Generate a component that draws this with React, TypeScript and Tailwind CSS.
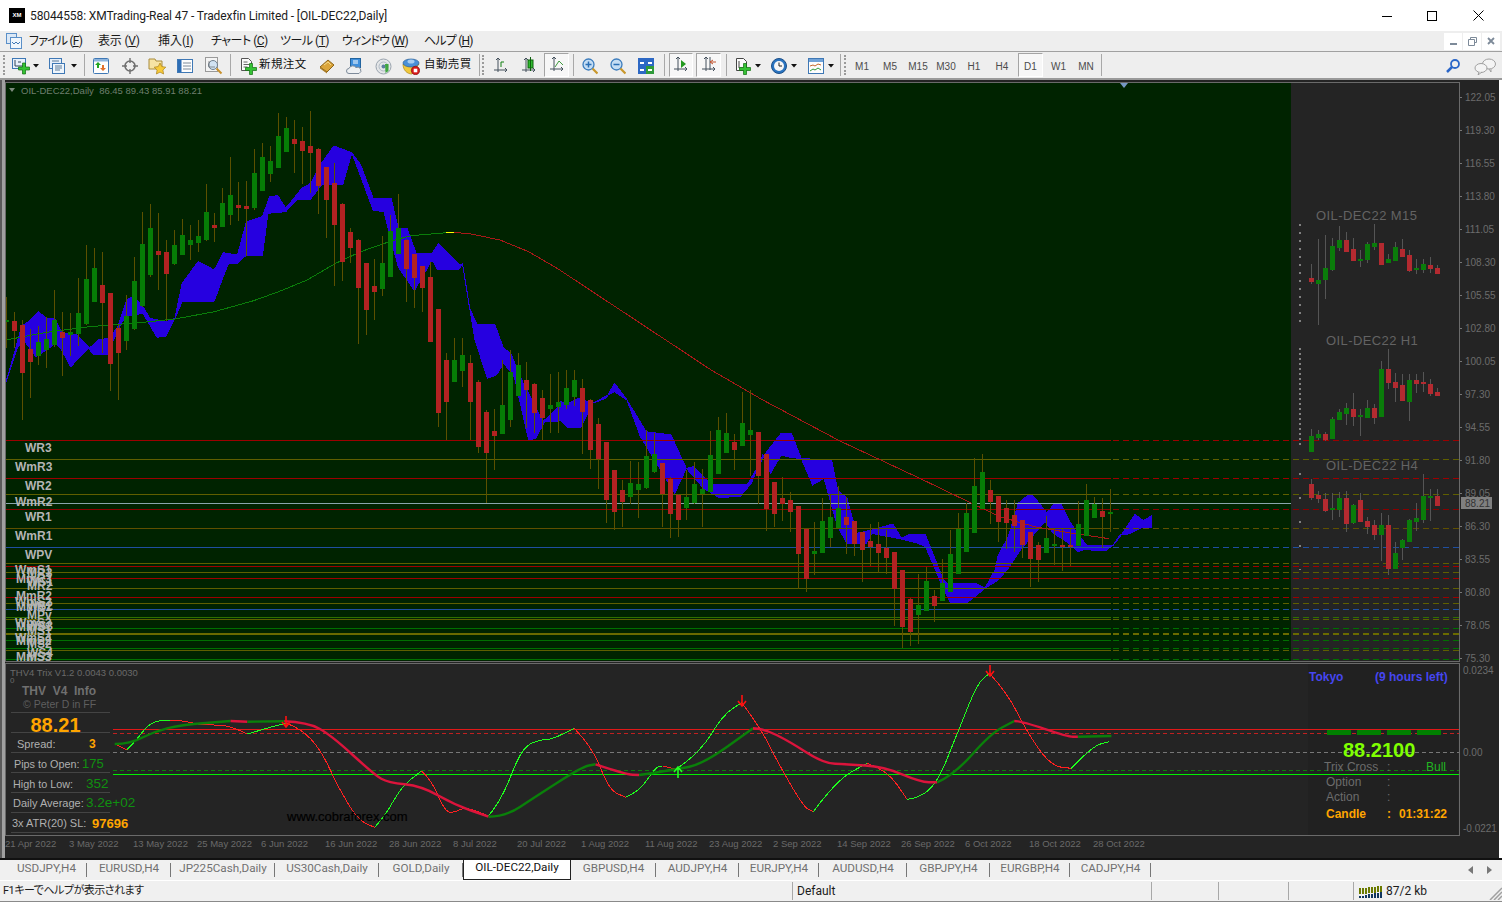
import React from "react";

const SANS = "font-['Liberation_Sans',Arial,sans-serif]";
const UI = "font-['Roboto','Noto_Sans_CJK_JP',sans-serif] [font-feature-settings:'palt']";

// candle rows: [bodyTop, bodyBottom, wickTop, wickBottom, up?] measured off the chart
type Row = [number, number, number, number, number];

const LEFT: Row[] = [
  [660, 665, 590, 745, 1], [663, 693, 636, 745, 0], [675, 819, 660, 960, 0], [747, 786, 688, 893, 0],
  [726, 768, 678, 795, 1], [717, 750, 652, 803, 1], [660, 735, 570, 740, 1], [696, 713, 636, 827, 0],
  [696, 705, 640, 768, 1], [639, 702, 533, 738, 1], [537, 672, 435, 675, 1], [504, 606, 444, 606, 1],
  [555, 609, 457, 760, 0], [579, 792, 578, 873, 0], [684, 759, 672, 900, 0], [648, 723, 585, 750, 1],
  [543, 687, 471, 690, 1], [432, 618, 336, 620, 1], [384, 525, 312, 530, 1], [453, 465, 339, 570, 0],
  [456, 522, 420, 662, 0], [435, 492, 390, 495, 1], [405, 465, 357, 466, 1], [420, 435, 375, 480, 1],
  [408, 429, 360, 456, 1], [336, 420, 252, 422, 1], [375, 384, 339, 426, 0], [309, 381, 264, 382, 1],
  [285, 345, 171, 375, 1], [315, 324, 246, 363, 0], [318, 327, 243, 468, 0], [219, 324, 147, 330, 1],
  [171, 273, 129, 274, 1], [183, 222, 138, 246, 1], [108, 204, 39, 205, 1], [84, 156, 51, 157, 1],
  [117, 132, 60, 219, 0], [123, 153, 81, 252, 0], [138, 159, 33, 280, 0], [147, 258, 145, 342, 0],
  [201, 300, 200, 414, 0], [249, 375, 189, 558, 0], [312, 486, 310, 543, 0], [396, 444, 384, 490, 0],
  [420, 564, 418, 732, 0], [489, 630, 488, 705, 0], [558, 576, 477, 660, 0], [489, 567, 408, 588, 1],
  [393, 531, 345, 532, 1], [384, 462, 282, 463, 1], [420, 507, 418, 606, 0], [462, 534, 461, 624, 0],
  [498, 564, 497, 636, 0], [531, 726, 487, 727, 0], [627, 939, 626, 980, 0], [780, 906, 760, 1020, 0],
  [780, 846, 714, 847, 1], [765, 813, 714, 860, 1], [789, 906, 765, 1020, 0], [846, 1040, 840, 1060, 0],
  [936, 1060, 930, 1210, 0], [993, 1008, 927, 1110, 0], [915, 1002, 780, 1003, 1], [816, 960, 750, 980, 1],
  [795, 888, 760, 889, 1], [840, 870, 786, 985, 0], [852, 939, 850, 1000, 0], [894, 954, 870, 1020, 0],
  [915, 927, 822, 1000, 1], [906, 920, 815, 1000, 1],
];

const RIGHT: Row[] = [
  [54, 105, 0, 118, 1], [30, 81, 0, 108, 1], [54, 126, 27, 252, 0], [90, 240, 88, 297, 0],
  [162, 268, 145, 357, 0], [216, 390, 215, 459, 0], [300, 426, 299, 480, 0], [360, 396, 330, 471, 0],
  [339, 381, 273, 403, 1], [342, 360, 276, 444, 1], [258, 354, 180, 356, 1], [252, 306, 190, 310, 1],
  [279, 373, 278, 471, 0], [327, 432, 320, 504, 0], [375, 450, 373, 501, 0], [381, 414, 300, 450, 1],
  [342, 400, 276, 402, 1], [357, 373, 296, 471, 1], [255, 366, 183, 367, 1], [180, 312, 141, 313, 1],
  [189, 249, 129, 250, 1], [216, 240, 192, 300, 0], [159, 228, 66, 229, 1], [180, 195, 60, 318, 1],
  [186, 318, 185, 402, 0], [252, 418, 251, 483, 0], [336, 432, 335, 471, 0], [384, 402, 321, 453, 0],
  [390, 426, 366, 486, 0], [408, 552, 407, 656, 0], [477, 626, 476, 665, 0], [543, 552, 456, 615, 1],
  [453, 549, 384, 550, 1], [441, 504, 372, 531, 1], [414, 474, 348, 475, 1], [441, 465, 381, 552, 0],
  [453, 522, 452, 558, 0], [486, 540, 485, 636, 0], [513, 531, 462, 588, 0], [522, 549, 456, 608, 0],
  [533, 564, 480, 612, 0], [546, 656, 545, 768, 0], [600, 771, 599, 834, 0], [686, 786, 685, 828, 0],
  [705, 735, 612, 822, 1], [633, 723, 590, 724, 1], [678, 708, 660, 755, 0], [639, 693, 567, 694, 1],
  [552, 666, 480, 667, 1], [476, 612, 429, 613, 1], [429, 546, 399, 547, 1], [348, 489, 264, 490, 1],
  [306, 417, 252, 418, 1], [360, 396, 330, 462, 0], [378, 456, 377, 516, 0], [414, 459, 390, 538, 0],
  [435, 468, 390, 546, 0], [450, 525, 449, 564, 0], [486, 567, 485, 651, 0], [525, 570, 516, 636, 0],
  [504, 549, 438, 550, 1], [522, 528, 474, 585, 1], [525, 531, 478, 603, 0], [525, 528, 478, 588, 0],
  [462, 528, 393, 529, 1], [390, 498, 342, 499, 1], [402, 444, 380, 445, 1], [423, 441, 384, 534, 0],
  [426, 431, 357, 486, 1],
];

const M15: Row[] = [
  [234, 246, 192, 252, 0], [240, 252, 117, 375, 1], [204, 240, 105, 297, 1], [138, 210, 114, 212, 1],
  [120, 144, 78, 152, 1], [120, 156, 96, 157, 0], [147, 183, 114, 184, 0], [177, 183, 150, 200, 1],
  [132, 180, 126, 188, 1], [129, 141, 72, 150, 1], [129, 195, 128, 196, 0], [177, 189, 162, 190, 1],
  [141, 183, 126, 184, 1], [147, 171, 117, 172, 0], [165, 213, 150, 216, 0], [204, 210, 177, 222, 1],
  [192, 210, 177, 218, 1], [195, 207, 171, 218, 0], [204, 222, 196, 223, 0],
];
const H1: Row[] = [
  [708, 756, 687, 757, 1], [702, 714, 690, 720, 1], [702, 720, 696, 722, 0], [657, 717, 650, 718, 1],
  [636, 660, 627, 661, 1], [624, 642, 609, 675, 1], [627, 651, 579, 678, 0], [645, 651, 627, 708, 1],
  [624, 654, 600, 655, 1], [624, 654, 612, 672, 0], [507, 651, 483, 652, 1], [507, 549, 447, 567, 0],
  [546, 564, 519, 606, 0], [555, 603, 522, 604, 0], [540, 606, 522, 663, 1], [540, 552, 522, 579, 0],
  [546, 552, 516, 576, 0], [552, 582, 537, 587, 0], [576, 588, 564, 589, 0],
];
const H4: Row[] = [
  [852, 894, 837, 900, 0], [885, 897, 873, 909, 0], [897, 933, 880, 936, 0], [924, 930, 879, 960, 1],
  [894, 930, 876, 951, 1], [894, 972, 873, 996, 0], [915, 969, 912, 972, 1], [900, 966, 879, 967, 0],
  [963, 981, 951, 1002, 0], [975, 1005, 960, 1020, 0], [975, 1005, 939, 1083, 1], [975, 1107, 945, 1125, 0],
  [1059, 1107, 1026, 1108, 1], [1020, 1044, 1018, 1080, 1], [960, 1026, 957, 1027, 1], [954, 966, 909, 993, 1],
  [888, 960, 822, 969, 1], [888, 894, 867, 963, 1], [888, 918, 867, 919, 0],
];

// measured coords to page coords
const a = (p: number[][]) => p.map(([x, y]) => `${(x / 2.8).toFixed(1)},${(100 + y / 3).toFixed(1)}`);
const b = (p: number[][]) => p.map(([x, y]) => `${(560 + x / 2.613).toFixed(1)},${(370 + y / 3).toFixed(1)}`);
const c = (p: number[][]) => p.map(([x, y]) => `${(950 + x / 3).toFixed(1)},${(480 + y / 3).toFixed(1)}`);

// indicator curve, rounded through the midpoints of the measured points
const ind = (p: number[][]) => {
  const q = p.map(([x, y]) => [100 + x / 1.493, 660 + y / 3]);
  let d = `M${q[0][0].toFixed(1)} ${q[0][1].toFixed(1)}`;
  for (let i = 1; i < q.length - 1; i++) {
    const mx = (q[i][0] + q[i + 1][0]) / 2;
    const my = (q[i][1] + q[i + 1][1]) / 2;
    d += `Q${q[i][0].toFixed(1)} ${q[i][1].toFixed(1)} ${mx.toFixed(1)} ${my.toFixed(1)}`;
  }
  const e = q[q.length - 1];
  return `${d}L${e[0].toFixed(1)} ${e[1].toFixed(1)}`;
};

const cloud = [
  ...a([[17, 845], [40, 760], [60, 680], [85, 660], [108, 635], [130, 655], [152, 655], [175, 700], [215, 705], [248, 742], [258, 740], [275, 720], [305, 715], [330, 680], [355, 600], [375, 588], [400, 620], [420, 655], [465, 665], [490, 655], [510, 550], [555, 485], [600, 510], [625, 458], [665, 465], [690, 365], [735, 350], [755, 290], [778, 287], [800, 325], [845, 265], [870, 250], [900, 190], [935, 138], [985, 158], [1010, 195], [1045, 295], [1095, 295], [1115, 385], [1140, 385], [1165, 460], [1210, 460], [1228, 430], [1285, 492], [1295, 492], [1315, 625], [1335, 672], [1385, 672], [1410, 745], [1430, 760], [1465, 850], [1480, 880], [1520, 965], [1560, 925]]),
  ...b([[0, 95], [20, 100], [50, 85], [85, 100], [120, 85], [143, 40], [175, 90], [225, 185], [290, 195], [330, 295], [350, 290], [375, 320], [395, 343], [490, 343], [540, 245], [578, 190], [605, 190], [630, 265], [710, 272], [725, 360], [750, 385], [775, 490], [815, 480], [870, 462], [892, 505], [915, 492], [955, 495], [1000, 625], [1010, 640], [1085, 640]]),
  ...c([[105, 325], [135, 270], [145, 225], [175, 170], [205, 70], [235, 45], [250, 48], [290, 98], [315, 70], [335, 75], [360, 125], [385, 165], [410, 195], [490, 195], [510, 170], [555, 103], [580, 122], [603, 108],
    [603, 143], [575, 143], [535, 162], [510, 165], [490, 195], [465, 213], [440, 212], [405, 208], [385, 215], [350, 185], [310, 160], [285, 125], [250, 165], [215, 205], [195, 235], [175, 265], [145, 300], [105, 325]]),
  ...b([[1065, 697], [1020, 697], [1000, 650], [955, 530], [935, 520], [890, 507], [815, 490], [800, 520], [750, 520], [725, 470], [690, 325], [660, 345], [630, 265], [605, 263], [578, 255], [550, 310], [530, 255], [500, 340], [470, 380], [415, 382], [375, 355], [330, 295], [300, 370], [210, 200], [175, 90], [143, 65], [85, 100], [55, 172], [20, 172], [0, 150]]),
  ...a([[1560, 965], [1525, 965], [1500, 1015], [1480, 1020], [1440, 830], [1410, 790], [1390, 825], [1365, 835], [1330, 720], [1295, 492], [1285, 508], [1225, 508], [1210, 480], [1160, 572], [1115, 500], [1075, 335], [1045, 330], [985, 158], [960, 253], [900, 255], [870, 297], [830, 300], [800, 335], [750, 340], [735, 465], [690, 465], [665, 490], [640, 490], [625, 530], [600, 603], [510, 605], [490, 655], [465, 708], [440, 712], [400, 640], [350, 650], [330, 690], [300, 764], [262, 764], [248, 745], [198, 800], [170, 745], [155, 730], [130, 750], [100, 770], [70, 725], [50, 740]]),
].join(" ");

const levels: [number, string][] = [
  [440.5, "#9c0000"], [459.5, "#5f5f00"], [478.5, "#9c0000"], [494.5, "#5f5f00"], [509.5, "#8a0000"], [528.5, "#5f5000"],
  [547.5, "#1f4fa0"], [563.5, "#5f5f00"], [566.5, "#a00000"], [572.5, "#5f5f00"], [578.5, "#a00000"], [588.5, "#5f5f00"],
  [597.5, "#9c0000"], [603.5, "#5f5f00"], [609.5, "#1f4fa0"], [617.5, "#2f7000"], [619.5, "#5f5f00"], [628.5, "#007000"],
  [633, "#6a6a00"], [634, "#6a6a00"], [640.5, "#007000"], [648.5, "#007000"], [650.5, "#5f5f00"], [659.5, "#007000"],
];

const labels: [string, number, number][] = [
  ["WR3", 25, 452], ["WmR3", 15, 471], ["WR2", 25, 490], ["WmR2", 15, 506], ["WR1", 25, 521], ["WmR1", 15, 540], ["WPV", 25, 559],
  ["WmS1", 15, 574], ["MR3", 27, 577], ["MmR3", 16, 583], ["WS1", 27, 586], ["MR2", 27, 590], ["MmR2", 16, 600], ["WmS2", 15, 606], ["MmR1", 16, 611],
  ["WS2", 27, 610], ["MPv", 27, 619], ["WmS3", 15, 627], ["MmS1", 16, 631], ["MS1", 27, 635], ["WS3", 27, 630], ["WmS4", 15, 642], ["MmS2", 16, 645], ["MS2", 27, 648], ["WS4", 27, 657], ["MmS3", 16, 661], ["MS3", 27, 661],
];

const prices = ["122.05", "119.30", "116.55", "113.80", "111.05", "108.30", "105.55", "102.80", "100.05", "97.30", "94.55", "91.80", "89.05", "86.30", "83.55", "80.80", "78.05", "75.30"];
const dates = ["21 Apr 2022", "3 May 2022", "13 May 2022", "25 May 2022", "6 Jun 2022", "16 Jun 2022", "28 Jun 2022", "8 Jul 2022", "20 Jul 2022", "1 Aug 2022", "11 Aug 2022", "23 Aug 2022", "2 Sep 2022", "14 Sep 2022", "26 Sep 2022", "6 Oct 2022", "18 Oct 2022", "28 Oct 2022"];

const Candle = ({ x, r, oy, scale, up, down, wick, w = 5 }: { x: number; r: Row; oy: number; scale: number; up: string; down: string; wick: string; w?: number }) => (
  <g>
    <rect x={x} y={oy + r[2] / scale} width={1} height={(r[3] - r[2]) / scale} fill={wick} />
    <rect x={x - (w - 1) / 2} y={oy + r[0] / scale} width={w} height={Math.max(2, (r[1] - r[0]) / scale)} fill={r[4] ? up : down} />
  </g>
);

const Mini = ({ rows }: { rows: Row[] }) => (
  <g>
    {rows.map((r, i) => (
      <Candle key={i} x={1311 + i * 7} r={r} oy={200} scale={3} up="#0a7c0a" down="#b32a30" wick="#555555" />
    ))}
  </g>
);

const MainChart = () => (
  <svg width={1494} height={582} viewBox="5 80 1494 582" className="block" shapeRendering="crispEdges" fontFamily="'Liberation Sans',Arial,sans-serif">
    <rect x={5} y={80} width={1494} height={582} fill="#242424" />
    <rect x={6} y={83} width={1285} height={578} fill="#002300" />
    <rect x={1291} y={83} width={168} height={578} fill="#242424" />
    <polygon points={cloud} fill="#2600e0" stroke="#2600e0" strokeWidth={1} />
    {levels.map(([y, col], i) => (
      <g key={i}>
        <rect x={6} y={Math.floor(y)} width={1105} height={1} fill={col} />
        <line x1={1113} x2={1459} y1={Math.floor(y) + 0.5} y2={Math.floor(y) + 0.5} stroke={col} strokeDasharray="6 4" />
      </g>
    ))}
    <rect x={6} y={503} width={1285} height={1} fill="#8aa5ad" />
    <polyline fill="none" stroke="#0a7d0a" points={a([[17, 720], [130, 697], [250, 680], [400, 667], [490, 657], [600, 635], [710, 602], [780, 575], [860, 540], [940, 490], [1010, 455], [1090, 425], [1150, 407], [1250, 398]]).join(" ")} />
    <polyline fill="none" stroke="#ffff00" points={a([[1250, 398], [1270, 398]]).join(" ")} />
    <polyline fill="none" stroke="#a81818" points={[...a([[1270, 398], [1310, 400], [1400, 420], [1480, 455], [1560, 505]]), ...b([[395, 0], [530, 90], [730, 212], [940, 325], [1085, 405], [1150, 440], [1240, 470], [1340, 490], [1435, 506]])].join(" ")} />
    {LEFT.map((r, i) => (
      <Candle key={i} x={6 + i * 8} r={r} oy={100} scale={3} up="#067d06" down="#b22222" wick="#5c5000" />
    ))}
    {RIGHT.map((r, i) => (
      <Candle key={i} x={566 + i * 8} r={r} oy={370} scale={3} up="#067d06" down="#b22222" wick="#5c5000" />
    ))}
    <Mini rows={M15} />
    <Mini rows={H1} />
    <Mini rows={H4} />
    <line x1={1300} x2={1300} y1={224} y2={322} stroke="#808080" strokeWidth={2} strokeDasharray="2 6" />
    <line x1={1300} x2={1300} y1={348} y2={446} stroke="#808080" strokeWidth={2} strokeDasharray="2 3" />
    <line x1={1300} x2={1300} y1={473} y2={570} stroke="#808080" strokeWidth={2} strokeDasharray="2 22" />
    <g fontSize={13} fill="#636363" letterSpacing={0.4} shapeRendering="auto">
      <text x={1316} y={220}>OIL-DEC22 M15</text>
      <text x={1326} y={345}>OIL-DEC22 H1</text>
      <text x={1326} y={470}>OIL-DEC22 H4</text>
    </g>
    <clipPath id="paneclip"><rect x={6} y={83} width={200} height={578} /></clipPath>
    <g fontSize={12} fontWeight={700} fill="#b4b4b4" shapeRendering="auto" clipPath="url(#paneclip)">
      {labels.map(([t, x, y], i) => (
        <text key={i} x={x} y={y}>{t}</text>
      ))}
    </g>
    <path d="M9 88h6l-3 4z" fill="#7d8a7d" shapeRendering="auto" />
    <text x={21} y={94} fontSize={9.5} fill="#6f7f6f" shapeRendering="auto">{"OIL-DEC22,Daily\u00A0\u00A086.45 89.43 85.91 88.21"}</text>
    <path d="M1120 83h8l-4 5z" fill="#7798c4" shapeRendering="auto" />
    <rect x={5.5} y={82.5} width={1454} height={579} fill="none" stroke="#6a6a6a" />
    {prices.map((p, i) => (
      <g key={p}>
        <rect x={1460} y={97 + i * 33} width={2} height={1} fill="#777777" />
        <text x={1465} y={101 + i * 33} fontSize={10} fill="#6c6c6c" shapeRendering="auto">{p}</text>
      </g>
    ))}
    <rect x={1461} y={497} width={31} height={12} fill="#808080" />
    <text x={1465} y={507} fontSize={10} fill="#333333" shapeRendering="auto">88.21</text>
  </svg>
);

const DownArrow = ({ x, y }: { x: number; y: number }) => (
  <path d={`M${x} ${y - 6}v10M${x - 4} ${y}l4 5l4 -5`} fill="none" stroke="#ff1010" strokeWidth={1.6} />
);

const Fast = ({ up, p }: { up?: boolean; p: number[][] }) => <path d={ind(p)} fill="none" stroke={up ? "#1eff1e" : "#ff2020"} strokeWidth={1} shapeRendering="crispEdges" />;
const Slow = ({ up, p }: { up?: boolean; p: number[][] }) => <path d={ind(p)} fill="none" stroke={up ? "#0a800a" : "#dc143c"} strokeWidth={2.4} />;

const IndicatorChart = () => (
  <svg width={1494} height={175} viewBox="5 662 1494 175" className="block" fontFamily="'Liberation Sans',Arial,sans-serif">
    <rect x={5} y={662} width={1494} height={175} fill="#242424" />
    <rect x={1308} y={664} width={150} height={171} fill="#212121" />
    <g shapeRendering="crispEdges">
      <line x1={113} x2={1459} y1={729.5} y2={729.5} stroke="#e01818" />
      <line x1={113} x2={1459} y1={733.5} y2={733.5} stroke="#c02020" strokeDasharray="4 3" />
      <line x1={113} x2={1459} y1={752.5} y2={752.5} stroke="#777777" strokeDasharray="4 3" />
      <line x1={113} x2={1459} y1={770.5} y2={770.5} stroke="#0c800c" strokeDasharray="4 3" />
      <line x1={113} x2={1459} y1={774.5} y2={774.5} stroke="#00f000" />
    </g>
    <Fast p={[[22, 252], [40, 270]]} />
    <Fast up p={[[40, 270], [55, 240], [75, 185], [105, 180]]} />
    <Fast p={[[105, 180], [125, 182], [150, 195], [190, 195], [220, 222]]} />
    <Fast up p={[[220, 222], [260, 198], [278, 190]]} />
    <Fast p={[[278, 190], [300, 205], [330, 270], [355, 380], [385, 480], [410, 502]]} />
    <Fast up p={[[410, 502], [425, 470], [450, 380], [480, 333]]} />
    <Fast p={[[480, 333], [495, 360], [515, 455], [530, 458], [545, 440], [580, 468]]} />
    <Fast up p={[[580, 468], [600, 420], [630, 260], [660, 238], [675, 238], [708, 205]]} />
    <Fast p={[[708, 205], [735, 260], [760, 390], [785, 412]]} />
    <Fast up p={[[785, 412], [805, 395], [830, 320], [840, 318]]} />
    <Fast p={[[840, 318], [860, 328]]} />
    <Fast up p={[[860, 328], [895, 280], [930, 165], [958, 128]]} />
    <Fast p={[[958, 128], [985, 200], [1010, 300], [1050, 440], [1065, 455]]} />
    <Fast up p={[[1065, 455], [1100, 360], [1145, 310]]} />
    <Fast p={[[1145, 310], [1175, 330], [1205, 418]]} />
    <Fast up p={[[1205, 418], [1222, 415], [1250, 370], [1280, 220], [1310, 70], [1328, 40]]} />
    <Fast p={[[1328, 40], [1355, 100], [1385, 220], [1420, 318], [1450, 325]]} />
    <Fast up p={[[1450, 325], [1482, 258], [1507, 245]]} />
    <Slow up p={[[22, 252], [45, 252], [80, 215], [120, 195], [195, 183]]} />
    <Slow p={[[195, 183], [220, 185]]} />
    <Slow up p={[[220, 185], [275, 184]]} />
    <Slow p={[[275, 184], [310, 187], [345, 225], [410, 345], [430, 368], [480, 378], [530, 435], [580, 470]]} />
    <Slow up p={[[580, 470], [605, 470], [650, 410], [720, 320], [740, 313]]} />
    <Slow p={[[740, 313], [785, 343], [805, 345]]} />
    <Slow up p={[[805, 345], [860, 328], [900, 312], [975, 205]]} />
    <Slow p={[[975, 205], [990, 205], [1030, 245], [1080, 310], [1115, 313], [1170, 320], [1225, 366], [1250, 367]]} />
    <Slow up p={[[1250, 367], [1275, 345], [1330, 220], [1365, 183]]} />
    <Slow p={[[1365, 183], [1375, 183], [1445, 230], [1460, 230]]} />
    <Slow up p={[[1460, 230], [1510, 228]]} />
    <DownArrow x={286} y={722} />
    <DownArrow x={742} y={701} />
    <DownArrow x={990} y={671} />
    <path d="M678 778v-10M674 772l4 -5l4 5" fill="none" stroke="#22ff22" strokeWidth={1.6} />
    <text x={287} y={821} fontSize={13} fill="#000000" stroke="#000000" strokeWidth={0.2}>www.cobraforex.com</text>
    <text x={10} y={676} fontSize={9.5} fill="#6a6a6a">THV4 Trix V1.2 0.0043 0.0030</text>
    <text x={10} y={683} fontSize={8} fill="#6a6a6a">0</text>
    <rect x={5.5} y={663.5} width={1454} height={172} fill="none" stroke="#6a6a6a" shapeRendering="crispEdges" />
    <g fontSize={10} fill="#6c6c6c">
      <text x={1463} y={674}>0.0234</text>
      <text x={1463} y={756}>0.00</text>
      <text x={1463} y={832}>-0.0221</text>
    </g>
  </svg>
);

const InfoRow = ({ label, lw, value, cls = "", pt = "pt-[3px]" }: { label: string; lw: string; value: string; cls?: string; pt?: string }) => (
  <div className={`flex h-[20px] items-center border-b border-[#444444] whitespace-nowrap text-[11px] text-[#b0b0b0] ${pt}`}>
    <span className={`shrink-0 ${lw}`}>{label}</span>
    <span className={`shrink-0 ${cls}`}>{value}</span>
  </div>
);

const InfoPanel = () => (
  <div className={`absolute left-[6px] top-[22px] w-[99px] ${SANS}`}>
    <div className="h-[29px] border-b border-[#444444]">
      <div className="pl-[11px] text-[12px] leading-[14px] font-bold whitespace-pre text-[#707070]">THV  V4  Info</div>
      <div className="pl-[12px] text-[10.5px] leading-[13px] text-[#5f5f5f]">© Peter D in FF</div>
    </div>
    <div className="flex h-[20px] items-center justify-center border-b border-[#444444] pt-[5px] pr-[10px] text-[20px] font-bold text-[#ffa500]">88.21</div>
    <InfoRow label="Spread:" lw="w-[78px] pl-[6px]" value="3" cls="text-[12px] font-bold text-[#ffa500]" />
    <InfoRow label="Pips to Open:" lw="w-[71px] pl-[3px] text-[10.8px]" value="175" cls="text-[13px] text-[#109010]" />
    <InfoRow label="High to Low:" lw="w-[75px] pl-[2px] text-[10.8px]" value="352" cls="text-[13.5px] text-[#109010]" />
    <InfoRow label="Daily Average:" lw="w-[75px] pl-[2px]" value="3.2e+02" cls="text-[13.5px] text-[#109010]" pt="pt-[1px]" />
    <InfoRow label="3x ATR(20) SL:" lw="w-[81px] pl-[1px]" value="97696" cls="text-[13px] font-bold text-[#ffa500]" pt="pt-[2px]" />
  </div>
);

const SignalRow = ({ label, color = "text-[#6c6c6c]", value, indent = "pl-[18px]" }: { label: string; color?: string; value?: React.ReactNode; indent?: string }) => (
  <div className={`flex h-[15px] items-center text-[12px] leading-[15px] ${color}`}>
    <span className={`w-[79px] ${indent}`}>{label}</span>
    <span className="w-[12px]">:</span>
    {value}
  </div>
);

const SignalPanel = () => (
  <div className={`absolute left-[1303px] top-[8px] w-[150px] ${SANS}`}>
    <div className="flex h-[14px] items-center text-[12px] font-bold text-[#4646f0]">
      <span className="w-[67px] pl-[1px]">Tokyo</span>
      <span>(9 hours left)</span>
    </div>
    <div className="mt-[46px] flex h-[5px] gap-[6px] pl-[19px]">
      <div className="w-[24px] bg-[#008000]" />
      <div className="w-[24px] bg-[#008000]" />
      <div className="w-[24px] bg-[#008000]" />
      <div className="w-[24px] bg-[#008000]" />
    </div>
    <div className="mt-[4px] h-[21px] pl-[35px] text-[20px] leading-[22px] font-bold text-[#7fff00]">88.2100</div>
    <SignalRow label="Trix Cross" indent="pl-[16px]" value={<span className="ml-[27px] text-[#22b422]">Bull</span>} />
    <SignalRow label="Option" />
    <SignalRow label="Action" />
    <div className="mt-[2px]">
      <SignalRow label="Candle" color="font-bold text-[#ffa500]" value={<span>01:31:22</span>} />
    </div>
  </div>
);

/* ---------- toolbar icons ---------- */

const Plus = ({ x, y }: { x: number; y: number }) => (
  <path d={`M${x - 1.5} ${y - 5.5}h3v4h4v3h-4v4h-3v-4h-4v-3h4z`} fill="#35c235" stroke="#0f6f0f" strokeWidth={0.7} />
);

const Caret = ({ cls }: { cls: string }) => (
  <svg width={6} height={4} className={cls}><path d="M0 0h6L3 3.5z" fill="#111111" /></svg>
);

const Sep = ({ cls }: { cls: string }) => <div className={`-mt-[2px] h-[22px] w-px bg-[#a8a8a8] ${cls}`} />;
const Grip = ({ cls }: { cls: string }) => <div className={`-mt-[2px] h-[20px] w-[2px] border-l-2 border-dotted border-[#9a9a9a] ${cls}`} />;

const NewChartIcon = () => (
  <svg width={18} height={18} className="ml-[7px]">
    <rect x={0.5} y={1.5} width={13} height={10} fill="#e8f1fb" stroke="#3f78b5" />
    <path d="M3 3v6h8M6 5h3" stroke="#33475c" fill="none" />
    <Plus x={12} y={11.5} />
  </svg>
);

const ProfileIcon = () => (
  <svg width={17} height={18} className="ml-[10px]">
    <rect x={0.5} y={1.5} width={12} height={10} fill="#e4eefa" stroke="#3f78b5" />
    <rect x={3.5} y={6.5} width={12} height={10} fill="#eef5fc" stroke="#3f78b5" />
    <path d="M6 9h7M6 11h7M6 13h5" stroke="#5d7a97" />
    <path d="M3 4h7" stroke="#5d7a97" />
  </svg>
);

const MarketIcon = () => (
  <svg width={16} height={18} className="ml-[8px]">
    <rect x={0.5} y={1.5} width={15} height={15} rx={1} fill="#fdfdfd" stroke="#3f78b5" />
    <rect x={1} y={2} width={14} height={2.5} fill="#8db4dd" />
    <path d="M5 5l3 3H6v3H4V8H2z" fill="#22a522" />
    <path d="M10 14l3-3h-2V8H9v3H7z" fill="#e0702a" />
  </svg>
);

const NavIcon = () => (
  <svg width={16} height={16} className="ml-[13px]">
    <circle cx={8} cy={8} r={5} fill="none" stroke="#6f6f6f" strokeWidth={1.6} />
    <path d="M8 0v5M8 11v5M0 8h5M11 8h5" stroke="#6f6f6f" strokeWidth={1.4} />
  </svg>
);

const StarFolderIcon = () => (
  <svg width={18} height={18} className="ml-[10px]">
    <path d="M1 2h6l1 2h6v8H1z" fill="#f6e3a4" stroke="#a98c3c" />
    <path d="M12 6l1.8 3.6 4 .6-2.9 2.8.7 4-3.600-1.900L8.400 17l.7-4-2.900-2.800 4-.6z" fill="#f7ca3a" stroke="#a9811a" strokeWidth={0.7} />
  </svg>
);

const TerminalIcon = () => (
  <svg width={16} height={16} className="ml-[11px]">
    <rect x={0.500} y={1.500} width={15} height={13} fill="#fdfdfd" stroke="#3f78b5" />
    <rect x={1} y={2} width={3.500} height={12} fill="#2c6db5" />
    <path d="M6 5h8M6 8h8M6 11h8" stroke="#7d8a99" />
  </svg>
);

const TesterIcon = () => (
  <svg width={18} height={18} className="ml-[12px]">
    <rect x={0.500} y={0.500} width={12} height={14} fill="#f4f4f4" stroke="#9a9a9a" />
    <circle cx={8} cy={8} r={4.500} fill="#d2e3f3" stroke="#6f7f8f" />
    <path d="M11.500 11.500l5 5" stroke="#c8912c" strokeWidth={2} />
    <path d="M4 4v6h6" stroke="#666666" fill="none" strokeWidth={0.7} />
  </svg>
);

const OrderIcon = () => (
  <svg width={17} height={18} className="ml-[9px]">
    <path d="M1.500 1.500h7l3 3v9h-10z" fill="#fbfbfb" stroke="#555555" />
    <path d="M3.500 5h4M3.500 7.500h6M3.500 10h4" stroke="#666666" />
    <Plus x={11} y={12} />
  </svg>
);

const GoldIcon = () => (
  <svg width={16} height={16} className="ml-[13px]">
    <path d="M1 9L9 2l6 5-7 7z" fill="#dba53a" stroke="#8b641a" />
    <path d="M1 9l7 5 0 1.500L1 10.500z" fill="#a87a22" />
    <path d="M5 7l4-3 3 3" stroke="#f4d98a" fill="none" />
  </svg>
);

const CloudIcon = () => (
  <svg width={16} height={17} className="ml-[11px]">
    <rect x={4.500} y={0.500} width={10} height={9} fill="#3f8fdc" stroke="#22649f" />
    <path d="M7 3h5M7 5h5" stroke="#ffffff" />
    <path d="M3 15.500a2.500 2.500 0 0 1 0-5 4 4 0 0 1 7-1 3 3 0 0 1 3 6z" fill="#eef0f2" stroke="#7d8a99" />
  </svg>
);

const SignalIcon = () => (
  <svg width={17} height={17} className="ml-[13px]">
    <circle cx={8.500} cy={8.500} r={7.500} fill="#e4e6e8" stroke="#9aa4ae" />
    <circle cx={8.500} cy={8.500} r={4.500} fill="none" stroke="#b0bac4" />
    <circle cx={8.500} cy={8.500} r={2} fill="#5d7f9f" />
    <path d="M10 6h3.500v7l-3 2z" fill="#3fa63f" />
  </svg>
);

const AutoIcon = () => (
  <svg width={18} height={17} className="ml-[10px]">
    <path d="M1 6c0 6 4 10 9 10l7-10z" fill="#f0c83c" stroke="#a9861a" strokeWidth={0.7} />
    <ellipse cx={9} cy={5} rx={8} ry={4} fill="#4a90d8" stroke="#2a5f95" strokeWidth={0.7} />
    <ellipse cx={9} cy={3.500} rx={3.500} ry={2} fill="#a8cdf0" />
    <circle cx={13.500} cy={12.500} r={4.200} fill="#d81818" stroke="#7a1010" strokeWidth={0.6} />
    <rect x={11.700} y={10.700} width={3.600} height={3.600} fill="#ffffff" />
  </svg>
);

const Axes = ({ children }: { children: React.ReactNode }) => (
  <svg width={14} height={18}>
    <path d="M4 1v14M0 13h13M2 3l2-2 2 2M11 11l2 2-2 2" fill="none" stroke="#44505c" />
    {children}
  </svg>
);

const ZoomIcon = ({ minus, cls }: { minus?: boolean; cls: string }) => (
  <svg width={16} height={17} className={cls}>
    <circle cx={6.500} cy={6.500} r={5.500} fill="#c4ddf4" stroke="#3b7cbd" strokeWidth={1.300} />
    <path d="M3.500 6.500h6" stroke="#2a6fb5" strokeWidth={1.500} />
    {!minus && <path d="M6.500 3.500v6" stroke="#2a6fb5" strokeWidth={1.500} />}
    <path d="M10.500 10.500l5 5" stroke="#c8972c" strokeWidth={2.200} />
  </svg>
);

const TileIcon = () => (
  <svg width={16} height={16} className="ml-[12px]" shapeRendering="crispEdges">
    <rect x={0} y={0} width={8} height={8} fill="#2d68c4" />
    <rect x={8} y={0} width={8} height={8} fill="#2d68c4" />
    <rect x={0} y={8} width={8} height={8} fill="#2d68c4" />
    <rect x={8} y={8} width={8} height={8} fill="#2f9a3a" />
    <rect x={2} y={4} width={4} height={2} fill="#ffffff" />
    <rect x={10} y={4} width={4} height={2} fill="#ffffff" />
    <rect x={2} y={11} width={4} height={2} fill="#ffffff" />
    <rect x={10} y={11} width={4} height={2} fill="#ffffff" />
  </svg>
);

const ToggleBtn = ({ w, cls = "", children }: { w: string; cls?: string; children: React.ReactNode }) => (
  <div className={`-mt-[2px] flex h-[24px] items-center justify-center border border-t-[#a4a4a4] border-r-white border-b-white border-l-[#a4a4a4] bg-[#f7f7f7] ${w} ${cls}`}>{children}</div>
);

const NewIndicatorIcon = () => (
  <svg width={16} height={18} className="ml-[8px]">
    <path d="M1.500 1.500h7l3 3v9h-10z" fill="#fbfbfb" stroke="#444444" />
    <path d="M4 4v7h5" stroke="#444444" fill="none" />
    <Plus x={10} y={12} />
  </svg>
);

const ClockIcon = () => (
  <svg width={16} height={18} className="ml-[10px]">
    <circle cx={8} cy={9} r={7.500} fill="#2a74c0" stroke="#1c4f88" />
    <circle cx={8} cy={9} r={5} fill="#f7f7f7" />
    <path d="M8 5.500V9h3" stroke="#222222" fill="none" />
  </svg>
);

const TemplateIcon = () => (
  <svg width={16} height={16} className="ml-[11px]">
    <rect x={0.500} y={0.500} width={15} height={15} fill="#fdfdfd" stroke="#3f78b5" />
    <rect x={1} y={1} width={14} height={3} fill="#6fa2d8" />
    <path d="M2 8l3-1 2 1 3-2 3 1" stroke="#c4682c" fill="none" />
    <path d="M2 13l3-2 2 1 3-2 3 2" stroke="#2f9a3a" fill="none" />
  </svg>
);

const TF = ({ label, w = "w-[28px]", cls = "" }: { label: string; w?: string; cls?: string }) => (
  <div className={`text-center text-[10px] text-[#4c4c4c] ${SANS} ${w} ${cls}`}>{label}</div>
);

const Toolbar = () => (
  <div className={`flex h-[26px] items-center bg-[#eeeeee] pt-[2px] pl-[3px] ${UI}`}>
    <Grip cls="" />
    <NewChartIcon />
    <Caret cls="ml-[3px]" />
    <ProfileIcon />
    <Caret cls="ml-[5px]" />
    <Sep cls="ml-[7px]" />
    <MarketIcon />
    <NavIcon />
    <StarFolderIcon />
    <TerminalIcon />
    <TesterIcon />
    <Sep cls="ml-[7px]" />
    <OrderIcon />
    <span className="-mt-[3px] ml-[2px] w-[47px] text-[11.5px] tracking-[0.4px] whitespace-nowrap text-[#111111]">新規注文</span>
    <GoldIcon />
    <CloudIcon />
    <SignalIcon />
    <AutoIcon />
    <span className="-mt-[3px] ml-[4px] w-[47px] text-[11.5px] tracking-[0.4px] whitespace-nowrap text-[#111111]">自動売買</span>
    <Sep cls="ml-[8px]" />
    <Grip cls="ml-[2px]" />
    <div className="ml-[10px]">
      <Axes><path d="M7 10V5h3" stroke="#128012" fill="none" /></Axes>
    </div>
    <div className="ml-[14px]">
      <Axes><rect x={6} y={3} width={5} height={8} fill="#2fbb2f" stroke="#0c600c" /><path d="M8.500 0v14" stroke="#0c600c" /></Axes>
    </div>
    <ToggleBtn w="w-[25px]" cls="ml-[8px]">
      <Axes><path d="M5 11l4-6 4 4" stroke="#3f9a3f" fill="none" /></Axes>
    </ToggleBtn>
    <Sep cls="ml-[4px]" />
    <ZoomIcon cls="ml-[8px]" />
    <ZoomIcon minus cls="ml-[12px]" />
    <TileIcon />
    <Sep cls="ml-[10px]" />
    <ToggleBtn w="w-[24px]" cls="ml-[4px]">
      <Axes><path d="M7 4l5 4-5 4z" fill="#22991f" /></Axes>
    </ToggleBtn>
    <ToggleBtn w="w-[25px]" cls="ml-[3px]">
      <Axes><path d="M8 1v13" stroke="#44505c" /><path d="M9 6h5M11 4l-3 2 3 2" stroke="#c0502a" fill="none" /></Axes>
    </ToggleBtn>
    <Sep cls="ml-[5px]" />
    <NewIndicatorIcon />
    <Caret cls="ml-[4px]" />
    <ClockIcon />
    <Caret cls="ml-[4px]" />
    <TemplateIcon />
    <Caret cls="ml-[4px]" />
    <Sep cls="ml-[6px]" />
    <Grip cls="ml-[3px]" />
    <TF label="M1" cls="ml-[2px]" />
    <TF label="M5" />
    <TF label="M15" />
    <TF label="M30" />
    <TF label="H1" />
    <TF label="H4" />
    <ToggleBtn w="w-[25px]" cls={`ml-[2px] pt-[2px] text-[10px] text-[#4c4c4c] ${SANS}`}>D1</ToggleBtn>
    <TF label="W1" w="w-[27px]" cls="ml-[2px]" />
    <TF label="MN" />
    <Sep cls="ml-[1px]" />
    <div className="flex-1" />
    <svg width={14} height={15}>
      <circle cx={9} cy={5} r={4} fill="none" stroke="#2a66c8" strokeWidth={1.800} />
      <path d="M6 8l-5 5" stroke="#2a66c8" strokeWidth={2.500} />
    </svg>
    <svg width={22} height={17} className="mr-[6px] ml-[14px]">
      <ellipse cx={15} cy={6} rx={6.500} ry={5} fill="#f4f4f4" stroke="#a0a0a0" />
      <ellipse cx={7} cy={10} rx={6} ry={4.500} fill="#f4f4f4" stroke="#a0a0a0" />
      <path d="M5 14l-1 3 4-3M15 11l2 3 0-3" fill="#e4e4e4" stroke="#8a8a8a" strokeWidth={0.7} />
    </svg>
  </div>
);

const Menu = ({ label, k, cls }: { label: string; k: string; cls: string }) => (
  <span className={`shrink-0 text-[12px] whitespace-pre text-[#1a1a1a] ${cls}`}>{label}(<span className="underline">{k}</span>)</span>
);

const MdiBtn = ({ children }: { children: React.ReactNode }) => (
  <div className="flex h-[17px] w-[18px] items-center justify-center bg-white">{children}</div>
);

const MenuBar = () => (
  <div className={`flex h-[21px] items-center border-b border-[#a0a0a0] bg-[#eeeeee] ${UI}`}>
    <svg width={16} height={16} className="ml-[6px]">
      <rect x={0.500} y={0.500} width={10} height={10} fill="#dbe8f6" stroke="#5a8fc8" />
      <rect x={4.500} y={4.500} width={11} height={11} fill="#f0f6fc" stroke="#5a8fc8" />
      <path d="M6 9l2 2 2-2 2 2 2-2" stroke="#3f78b5" fill="none" />
    </svg>
    <Menu label="ファイル " k="F" cls="ml-[7px] w-[69px] tracking-[-0.8px]" />
    <Menu label="表示 " k="V" cls="w-[60px] tracking-[-0.2px]" />
    <Menu label="挿入" k="I" cls="w-[53px]" />
    <Menu label="チャート " k="C" cls="w-[69px] tracking-[-0.5px]" />
    <Menu label="ツール " k="T" cls="w-[62px] tracking-[-0.5px]" />
    <Menu label="ウィンドウ " k="W" cls="w-[82px] tracking-[-0.8px]" />
    <Menu label="ヘルプ " k="H" cls="tracking-[-0.8px]" />
    <div className="flex-1" />
    <div className="mr-[2px] flex gap-px">
      <MdiBtn><div className="mt-[6px] h-[2px] w-[7px] bg-[#7d8a99]" /></MdiBtn>
      <MdiBtn>
        <svg width={9} height={9}><path d="M2.500 2.500V.5h6v5H6.500M.5 2.500h6v6h-6z" fill="none" stroke="#7d8a99" /></svg>
      </MdiBtn>
      <MdiBtn>
        <svg width={8} height={8}><path d="M1 1l6 6M7 1L1 7" stroke="#7d8a99" strokeWidth={1.800} /></svg>
      </MdiBtn>
    </div>
  </div>
);

const TitleBar = () => (
  <div className={`flex h-[31px] items-center bg-white ${UI}`}>
    <div className={`ml-[9px] flex h-[15px] w-[16px] items-center justify-center bg-black text-[6px] font-bold text-white ${SANS}`}>XM</div>
    <span className="ml-[5px] text-[12px] tracking-[-0.1px] whitespace-nowrap text-[#1c1c1c]">58044558: XMTrading-Real 47 - Tradexfin Limited - [OIL-DEC22,Daily]</span>
    <div className="flex-1" />
    <svg width={10} height={10} className="mr-[35px]"><path d="M0 5.500h10" stroke="#000000" /></svg>
    <svg width={10} height={10} className="mr-[36px]"><rect x={0.500} y={0.500} width={9} height={9} fill="none" stroke="#000000" /></svg>
    <svg width={11} height={11} className="mr-[18px]"><path d="M.5.5l10 10M10.500.5l-10 10" stroke="#000000" /></svg>
  </div>
);

const TABS = [
  ["USDJPY,H4", "w-[87px] pl-[6px]"], ["EURUSD,H4", "w-[84px]"], ["JP225Cash,Daily", "w-[104px]"], ["US30Cash,Daily", "w-[104px]"], ["GOLD,Daily", "w-[84px]"],
];
const TABS2 = [
  ["GBPUSD,H4", "w-[85px]"], ["AUDJPY,H4", "w-[83px]"], ["EURJPY,H4", "w-[80px]"], ["AUDUSD,H4", "w-[88px]"], ["GBPJPY,H4", "w-[83px]"], ["EURGBP,H4", "w-[80px]"], ["CADJPY,H4", "w-[81px]"],
];

const Tab = ({ t, w }: { t: string; w: string }) => (
  <div className={`relative flex h-[20px] items-center justify-center pb-[3px] text-[11.7px] text-[#707070] ${w}`}>
    {t}
    <div className="absolute top-[3px] right-0 h-[14px] w-px bg-[#777777]" />
  </div>
);

const Tabs = () => (
  <div className={`flex h-[20px] items-center bg-[#f0f0f0] ${UI}`}>
    {TABS.map(([t, w]) => <Tab key={t} t={t} w={w} />)}
    <div className="flex h-[20px] w-[108px] items-center justify-center border-x border-b border-[#222222] bg-white pb-[3px] text-[11.7px] text-[#111111]">OIL-DEC22,Daily</div>
    {TABS2.map(([t, w]) => <Tab key={t} t={t} w={w} />)}
    <div className="flex-1" />
    <svg width={5} height={8} className="mr-[14px]"><path d="M5 0v8L0 4z" fill="#777777" /></svg>
    <svg width={5} height={8} className="mr-[10px]"><path d="M0 0v8l5-4z" fill="#777777" /></svg>
  </div>
);

const StatusCell = ({ w, children }: { w: string; children?: React.ReactNode }) => (
  <div className={`flex h-[18px] items-center border-l border-[#a8a8a8] pl-[4px] ${w}`}>{children}</div>
);

const StatusBar = () => (
  <div className={`flex h-[22px] items-center border-t border-b border-t-white border-b-[#8a8a8a] bg-[#f0f0f0] text-[12px] text-[#1c1c1c] ${UI}`}>
    <div className="w-[792px] pl-[3px] text-[11px] tracking-[-0.5px]">F1キーでヘルプが表示されます</div>
    <StatusCell w="w-[359px]">Default</StatusCell>
    <StatusCell w="w-[67px]" />
    <StatusCell w="w-[70px]" />
    <StatusCell w="w-[65px]" />
    <StatusCell w="flex-1">
      <svg width={24} height={14} className="ml-[1px]" shapeRendering="crispEdges">
        {Array.from({ length: 8 }, (_, i) => (
          <g key={i}>
            <rect x={i * 3} y={2 + (7 - i) * 0.3} width={2} height={6} fill="#6b7a00" />
            <rect x={i * 3} y={8 + (7 - i) * 0.6} width={2} height={6 - (7 - i) * 0.6} fill="#12365f" />
          </g>
        ))}
      </svg>
      <span className="ml-[3px]">87/2 kb</span>
      <div className="flex-1" />
      <svg width={14} height={14} className="mt-[4px]">
        <path d="M14 2L2 14M14 6L6 14M14 10l-4 4" stroke="#a0a0a0" strokeWidth={1.500} />
      </svg>
    </StatusCell>
  </div>
);

export default function App() {
  return (
    <div className="flex h-[902px] w-[1502px] flex-col overflow-hidden bg-white">
      <TitleBar />
      <MenuBar />
      <Toolbar />
      <div className="h-[2px] bg-[#9a9a9a]" />
      <div className="flex flex-1">
        <div className="w-[5px] border-l-2 border-[#5a5a5a] bg-[#a0a0a0]" />
        <div className="w-[1494px] bg-[#242424]">
          <MainChart />
          <div className="relative">
            <IndicatorChart />
            <InfoPanel />
            <SignalPanel />
          </div>
          <div className={`flex h-[19px] text-[9.5px] whitespace-nowrap text-[#6a6a6a] ${SANS}`}>
            {dates.map((d) => (
              <div key={d} className="w-[64px]">{d}</div>
            ))}
          </div>
        </div>
        <div className="flex-1 bg-white" />
      </div>
      <div className="h-[2px] bg-[#111111]" />
      <Tabs />
      <StatusBar />
    </div>
  );
}
